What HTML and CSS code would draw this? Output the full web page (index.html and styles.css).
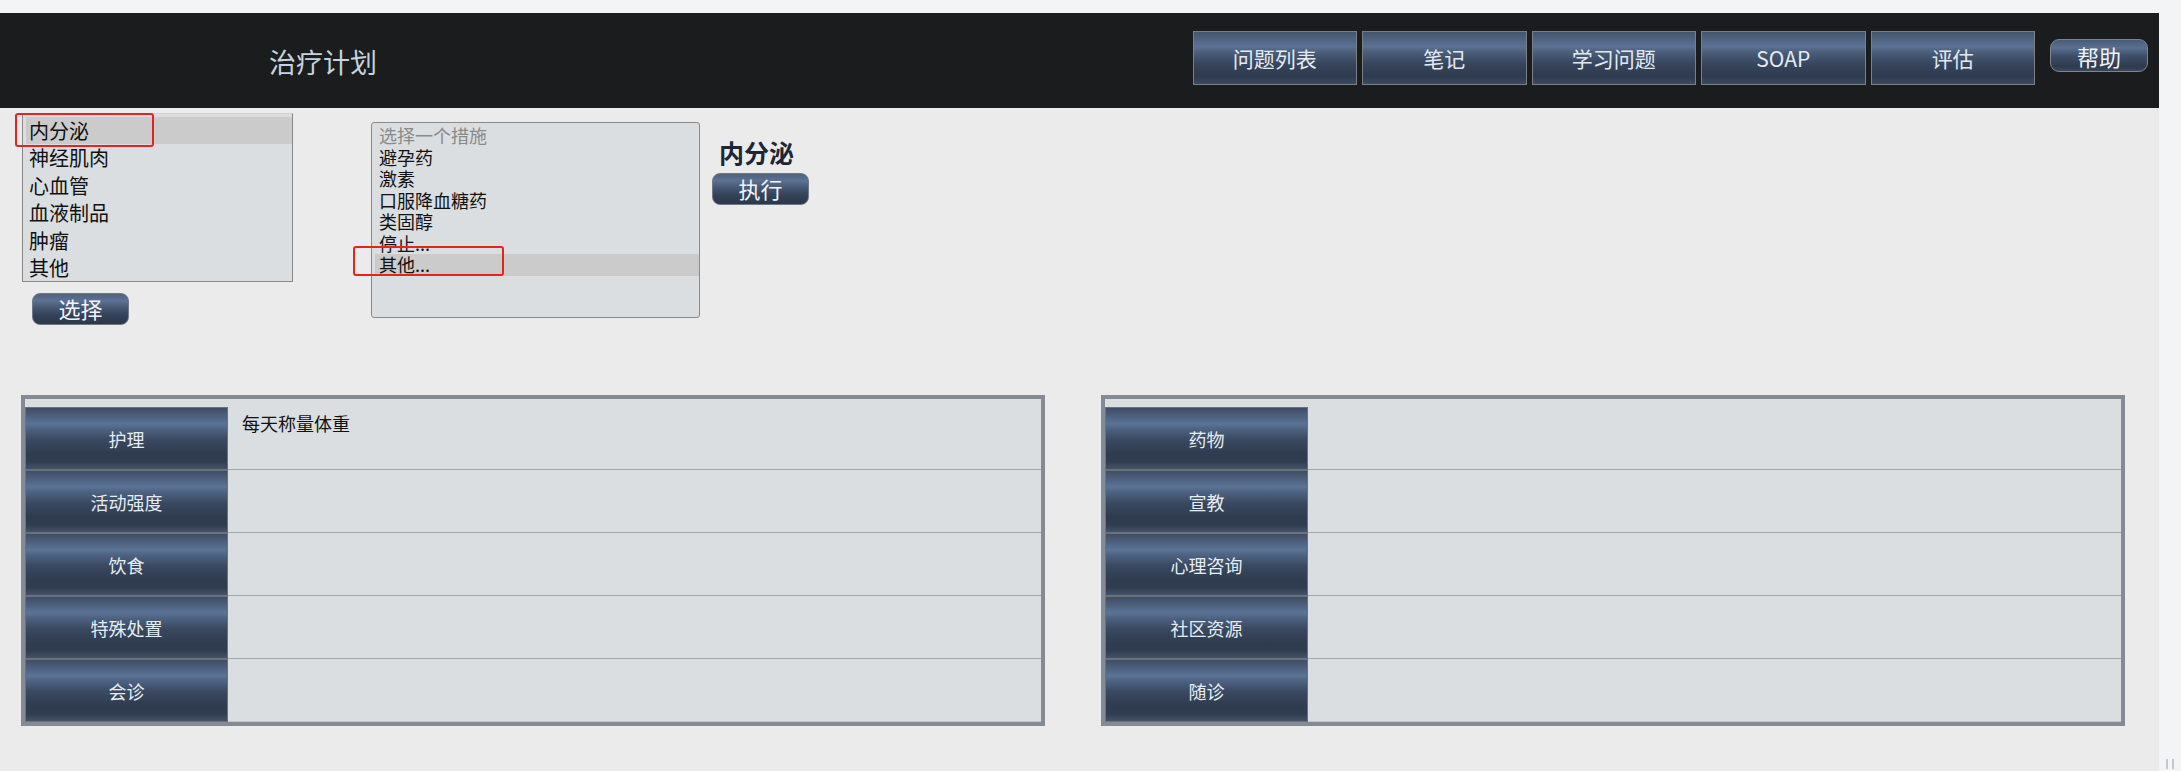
FILE: index.html
```html
<!DOCTYPE html>
<html lang="zh-CN">
<head>
	<meta charset="UTF-8">
	<title>治疗计划</title>
	<link rel="stylesheet" href="styles.css">
</head>
<body>
	<div class="app">
		<div class="topbar">
			<h1 class="title">治疗计划</h1>
			<div class="nav">
				<a class="nav-btn" href="javascript:;">问题列表</a>
				<a class="nav-btn" href="javascript:;">笔记</a>
				<a class="nav-btn" href="javascript:;">学习问题</a>
				<a class="nav-btn" href="javascript:;">SOAP</a>
				<a class="nav-btn" href="javascript:;">评估</a>
			</div>
			<a class="help" href="javascript:;">帮助</a>
		</div>

		<div class="picker">
			<div class="col-cat">
				<div class="listbox cats">
					<div class="opt selected">内分泌</div>
					<div class="opt">神经肌肉</div>
					<div class="opt">心血管</div>
					<div class="opt">血液制品</div>
					<div class="opt">肿瘤</div>
					<div class="opt">其他</div>
					<span class="mark mark-cat"></span>
				</div>
				<a class="btn btn-select" href="javascript:;">选择</a>
			</div>

			<div class="listbox acts">
				<div class="opt hint">选择一个措施</div>
				<div class="opt">避孕药</div>
				<div class="opt">激素</div>
				<div class="opt">口服降血糖药</div>
				<div class="opt">类固醇</div>
				<div class="opt">停止...</div>
				<div class="opt selected">其他...</div>
				<span class="mark mark-act"></span>
			</div>

			<div class="col-act">
				<div class="cat-name">内分泌</div>
				<a class="btn" href="javascript:;">执行</a>
			</div>
		</div>

		<div class="plans">
			<div class="plan">
				<div class="row"><div class="label">护理</div><div class="cell">每天称量体重</div></div>
				<div class="row"><div class="label">活动强度</div><div class="cell"></div></div>
				<div class="row"><div class="label">饮食</div><div class="cell"></div></div>
				<div class="row"><div class="label">特殊处置</div><div class="cell"></div></div>
				<div class="row"><div class="label">会诊</div><div class="cell"></div></div>
			</div>
			<div class="plan">
				<div class="row"><div class="label">药物</div><div class="cell"></div></div>
				<div class="row"><div class="label">宣教</div><div class="cell"></div></div>
				<div class="row"><div class="label">心理咨询</div><div class="cell"></div></div>
				<div class="row"><div class="label">社区资源</div><div class="cell"></div></div>
				<div class="row"><div class="label">随诊</div><div class="cell"></div></div>
			</div>
		</div>
	</div>
	<div class="rail"><span class="grip"></span></div>
</body>
</html>
```

FILE: styles.css
```css
*{padding: 0; margin: 0; box-sizing: border-box;}
body{
	display: flex; height: 771px; overflow: hidden;
	background: #f3f4f5;
	font-family: "Noto Sans CJK SC", "Noto Sans", sans-serif;
}
a{text-decoration: none;}

.app{width: 2159px; height: 758px; margin-top: 13px; background: #ebebeb;}

/* header */
.topbar{display: flex; align-items: flex-start; height: 95px; padding-right: 11px; background: #1b1c1e;}
.title{margin: 31px 0 0 269px; font-size: 27px; font-weight: normal; line-height: 36px; color: #c5d3de;}
.nav{display: flex; gap: 5px; margin: 18px 0 0 auto;}
.nav-btn{
	display: flex; align-items: center; justify-content: center;
	width: 164.5px; height: 54px; border: 1px solid #7c8084;
	font-size: 21px; color: #e4eaf0;
	background: linear-gradient(to bottom, #45556e 0%, #5a7294 28%, #4a5c78 40%, #37455d 62%, #2e3a4d 85%, #3c4a62 100%);
}
.help{
	display: flex; align-items: center; justify-content: center;
	width: 98px; height: 33px; margin: 26px 0 0 15px;
	border: 1px solid #7d858f; border-radius: 9px;
	font-size: 22px; color: #eef2f6;
	background: linear-gradient(to bottom, #4a5b75 0%, #5a7092 25%, #3f4f68 50%, #2e3a4e 85%, #3a475d 100%);
}

/* pickers */
.picker{display: flex; align-items: flex-start; height: 287px; padding: 5px 0 0 22px;}
.listbox{position: relative; background: #dadee1; border: 1px solid #8a8a8a; color: #111;}
.listbox .opt{white-space: nowrap;}
.listbox .selected{background: #cbcbcb;}
.cats{width: 271px; height: 169px; padding: 3px 0 3px 3px; border-top-color: #d0d2d4;}
.cats .opt{font-size: 20px; line-height: 27.4px; padding-left: 3px;}
.acts{width: 329px; height: 196px; margin: 9px 0 0 78px; padding: 2px 0 2px 3px; border-radius: 3px;}
.acts .opt{font-size: 18px; line-height: 21.5px; padding-left: 4px;}
.acts .hint{color: #8a8a8a;}
.mark{position: absolute; border: 2px solid #e0261f; border-radius: 3px;}
.mark-cat{left: -8px; top: -1px; width: 139px; height: 34px;}
.mark-act{left: -19px; top: 123px; width: 151px; height: 30px;}

.btn{
	display: block; width: 97px; height: 32px;
	border: 1px solid #6f7886; border-radius: 8px;
	font-size: 22px; line-height: 29px; text-align: center; color: #f0f4f8;
	background: linear-gradient(to bottom, #4e607c 0%, #5c7294 22%, #475874 45%, #34425a 70%, #2b374a 100%);
}
.btn-select{margin: 11px 0 0 10px;}
.col-act{margin: 24px 0 0 12px;}
.cat-name{margin-left: 7px; font-size: 25px; font-weight: bold; line-height: 30px; color: #1c2636;}
.col-act .btn{margin-top: 6px;}

/* plan tables */
.plans{display: flex; gap: 56px; padding-left: 21px;}
.plan{width: 1024px; padding-top: 8px; border: 4px solid #858b95; background: #dadee1;}
.row{display: flex; height: 63px;}
.label{
	display: flex; align-items: center; justify-content: center;
	width: 203px; border: 1px solid #6c7178;
	font-size: 18px; color: #e6edf3;
	background: linear-gradient(to bottom, #3f4d64 0%, #5a7396 26%, #4c607e 36%, #3a4961 52%, #2f3b4e 76%, #303c50 88%, #44526a 100%);
}
.cell{flex: 1; padding: 3px 14px; border-bottom: 1px solid #a1a7ae; font-size: 18px; line-height: 26px; color: #111;}
.row:last-child .cell{border-bottom-color: #c2c6ca;}

.rail{flex: 1; display: flex; align-items: flex-end; justify-content: center;}
.grip{width: 8px; height: 10px; margin-bottom: 2px; border-left: 2px solid #c4c8cc; border-right: 2px solid #c4c8cc;}
```
